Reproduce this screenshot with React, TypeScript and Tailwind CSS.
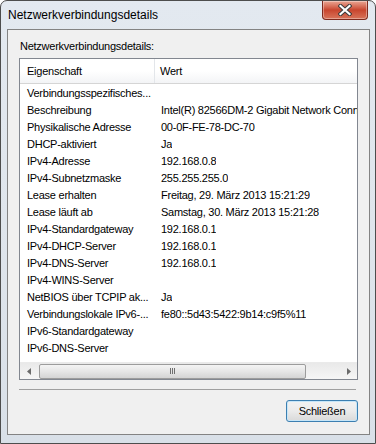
import React from "react";

const ROWS: [string, string][] = [
    ["Verbindungsspezifisches...", ""],
    ["Beschreibung", "Intel(R) 82566DM-2 Gigabit Network Connection"],
    ["Physikalische Adresse", "00-0F-FE-78-DC-70"],
    ["DHCP-aktiviert", "Ja"],
    ["IPv4-Adresse", "192.168.0.8"],
    ["IPv4-Subnetzmaske", "255.255.255.0"],
    ["Lease erhalten", "Freitag, 29. März 2013 15:21:29"],
    ["Lease läuft ab", "Samstag, 30. März 2013 15:21:28"],
    ["IPv4-Standardgateway", "192.168.0.1"],
    ["IPv4-DHCP-Server", "192.168.0.1"],
    ["IPv4-DNS-Server", "192.168.0.1"],
    ["IPv4-WINS-Server", ""],
    ["NetBIOS über TCPIP ak...", "Ja"],
    ["Verbindungslokale IPv6-...", "fe80::5d43:5422:9b14:c9f5%11"],
    ["IPv6-Standardgateway", ""],
    ["IPv6-DNS-Server", ""],
];

function CloseButton() {
    return (
        <div className="absolute right-[7px] top-0 w-[46px] h-[19px] rounded-b-[4px] border border-t-0 border-[#7e2a1e] bg-gradient-to-b from-[#e9a593] via-[#c8452e] to-[#d8735a] flex items-center justify-center shadow-[inset_0_0_0_1px_rgba(255,255,255,0.35)]">
            {/* X glyph */}
            <svg width="14" height="12" viewBox="0 0 14 12">
                <path d="M2.5 2 L11.5 10 M11.5 2 L2.5 10" stroke="#3b3b3b" strokeWidth="4.2" strokeLinecap="square" />
                <path d="M2.5 2 L11.5 10 M11.5 2 L2.5 10" stroke="#ffffff" strokeWidth="2.2" strokeLinecap="square" />
            </svg>
        </div>
    );
}

function HScrollbar() {
    return (
        <div className="h-[17px] flex items-center bg-gradient-to-b from-[#e9e9e9] to-[#f6f6f6] border-t border-[#eaeaea]">
            {/* left arrow */}
            <div className="w-[17px] h-full flex items-center justify-center">
                <svg width="4" height="7" viewBox="0 0 4 7">
                    <path d="M4 0 L0 3.5 L4 7 Z" fill="#6b6b6b" />
                </svg>
            </div>
            {/* thumb */}
            <div className="w-[267px] h-[15px] ml-[2px] rounded-[2px] border border-[#9c9c9c] bg-gradient-to-b from-[#f4f4f4] via-[#e6e6e6] to-[#d4d4d4] flex items-center justify-center">
                <div className="flex gap-[1px]">
                    <div className="w-[1px] h-[6px] bg-[#6f6f6f]" />
                    <div className="w-[1px] h-[6px] bg-[#6f6f6f]" />
                    <div className="w-[1px] h-[6px] bg-[#6f6f6f]" />
                </div>
            </div>
            <div className="flex-1" />
            {/* right arrow */}
            <div className="w-[17px] h-full flex items-center justify-center">
                <svg width="4" height="7" viewBox="0 0 4 7">
                    <path d="M0 0 L4 3.5 L0 7 Z" fill="#6b6b6b" />
                </svg>
            </div>
        </div>
    );
}

export default function App() {
    return (
        <div
            className="w-[376px] h-[444px] bg-white text-black"
            style={{ fontFamily: '"Liberation Sans", Arial, sans-serif' }}
        >
            {/* Window frame */}
            <div className="relative h-full rounded-t-[7px] border border-[#4d4d4d] bg-gradient-to-b from-[#e3e9f0] via-[#dfe5ec] to-[#d9e0e8] flex flex-col pl-[6px] pr-[5px] pb-[8px]">
                <div className="h-[28px] flex items-center pl-[1px] pt-[1px] text-[12px] leading-[15px]">
                    Netzwerkverbindungsdetails
                </div>
                <CloseButton />

                {/* Client area */}
                <div className="flex-1 border border-[#838383] bg-[#f0f0f0] flex flex-col px-[11px] text-[11px] tracking-[-0.25px]">
                    <div className="pt-[9px] pl-[1px] leading-[14px]">Netzwerkverbindungsdetails:</div>

                    {/* List view */}
                    <div className="mt-[5px] h-[322px] border border-[#828790] bg-white flex flex-col">
                        <div className="h-[25px] flex border-b border-[#d5d5d5] bg-gradient-to-b from-white via-white to-[#f3f4f6]">
                            <div className="w-[135px] border-r border-[#e3e6ea] flex items-center pl-[7px]">Eigenschaft</div>
                            <div className="flex-1 flex items-center pl-[5px]">Wert</div>
                        </div>
                        <div className="flex-1 pt-[1px] overflow-hidden">
                            {ROWS.map(([k, v], i) => (
                                <div key={i} className="h-[17px] flex items-center whitespace-nowrap">
                                    <div className="w-[135px] shrink-0 pl-[7px] overflow-hidden">{k}</div>
                                    <div className="pl-[6px] overflow-hidden">{v}</div>
                                </div>
                            ))}
                        </div>
                        <HScrollbar />
                    </div>

                    {/* Separator */}
                    <div className="mt-[9px] mr-[2px] h-[1px] bg-[#a0a0a0]" />

                    {/* Buttons */}
                    <div className="mt-[10px] flex justify-end">
                        <button className="w-[72px] h-[22px] rounded-[3px] border border-[#3c7fb1] bg-gradient-to-b from-[#f2f2f2] via-[#ebebeb] to-[#d9d9d9] shadow-[inset_0_0_0_1px_#c7e6f8] text-[11px] tracking-[-0.25px] leading-none">
                            Schließen
                        </button>
                    </div>
                </div>
            </div>
        </div>
    );
}
